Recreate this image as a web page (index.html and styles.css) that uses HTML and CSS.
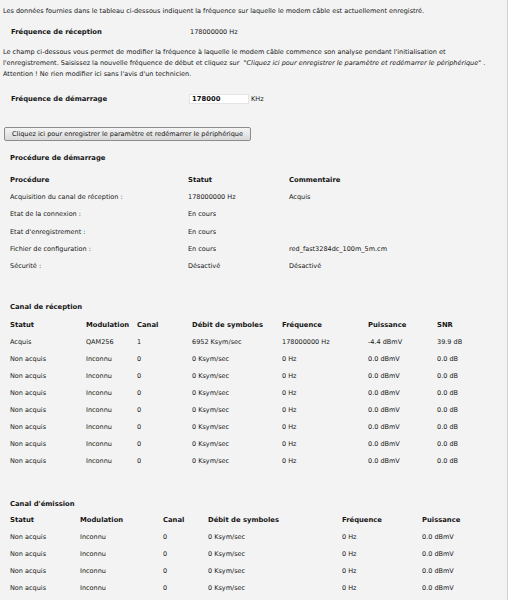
FILE: index.html
```html
<!DOCTYPE html>
<html lang="fr">
<head>
    <meta charset="UTF-8">
    <meta name="viewport" content="width=device-width, initial-scale=1.0">
    <title>Etat du modem câble</title>
    <link rel="stylesheet" href="styles.css">
</head>
<body>
    <div class="panel">
        <p class="intro">Les données fournies dans le tableau ci-dessous indiquent la fréquence sur laquelle le modem câble est actuellement enregistré.</p>

        <table class="pair">
            <tr>
                <th>Fréquence de réception</th>
                <td>178000000 Hz</td>
            </tr>
        </table>

        <p class="note">
            Le champ ci-dessous vous permet de modifier la fréquence à laquelle le modem câble commence son analyse pendant l'initialisation et<br>
            l'enregistrement. Saisissez la nouvelle fréquence de début et cliquez sur &nbsp;<em>"Cliquez ici pour enregistrer le paramètre et redémarrer le périphérique"</em> .<br>
            Attention ! Ne rien modifier ici sans l'avis d'un technicien.
        </p>

        <table class="pair start">
            <tr>
                <th>Fréquence de démarrage</th>
                <td><input type="text" class="freq-input" value="178000"> KHz</td>
            </tr>
        </table>

        <button class="btn">Cliquez ici pour enregistrer le paramètre et redémarrer le périphérique</button>

        <h3 class="title first">Procédure de démarrage</h3>
        <table class="grid proc">
            <tr><th>Procédure</th><th>Statut</th><th>Commentaire</th></tr>
            <tr><td>Acquisition du canal de réception :</td><td>178000000 Hz</td><td>Acquis</td></tr>
            <tr><td>Etat de la connexion :</td><td>En cours</td><td></td></tr>
            <tr><td>Etat d'enregistrement :</td><td>En cours</td><td></td></tr>
            <tr><td>Fichier de configuration :</td><td>En cours</td><td>red_fast3284dc_100m_5m.cm</td></tr>
            <tr><td>Sécurité :</td><td>Désactivé</td><td>Désactivé</td></tr>
        </table>

        <h3 class="title recv-title">Canal de réception</h3>
        <table class="grid recv">
            <tr><th>Statut</th><th>Modulation</th><th>Canal</th><th>Débit de symboles</th><th>Fréquence</th><th>Puissance</th><th>SNR</th></tr>
            <tr><td>Acquis</td><td>QAM256</td><td>1</td><td>6952 Ksym/sec</td><td>178000000 Hz</td><td>-4.4 dBmV</td><td>39.9 dB</td></tr>
            <tr><td>Non acquis</td><td>Inconnu</td><td>0</td><td>0 Ksym/sec</td><td>0 Hz</td><td>0.0 dBmV</td><td>0.0 dB</td></tr>
            <tr><td>Non acquis</td><td>Inconnu</td><td>0</td><td>0 Ksym/sec</td><td>0 Hz</td><td>0.0 dBmV</td><td>0.0 dB</td></tr>
            <tr><td>Non acquis</td><td>Inconnu</td><td>0</td><td>0 Ksym/sec</td><td>0 Hz</td><td>0.0 dBmV</td><td>0.0 dB</td></tr>
            <tr><td>Non acquis</td><td>Inconnu</td><td>0</td><td>0 Ksym/sec</td><td>0 Hz</td><td>0.0 dBmV</td><td>0.0 dB</td></tr>
            <tr><td>Non acquis</td><td>Inconnu</td><td>0</td><td>0 Ksym/sec</td><td>0 Hz</td><td>0.0 dBmV</td><td>0.0 dB</td></tr>
            <tr><td>Non acquis</td><td>Inconnu</td><td>0</td><td>0 Ksym/sec</td><td>0 Hz</td><td>0.0 dBmV</td><td>0.0 dB</td></tr>
            <tr><td>Non acquis</td><td>Inconnu</td><td>0</td><td>0 Ksym/sec</td><td>0 Hz</td><td>0.0 dBmV</td><td>0.0 dB</td></tr>
        </table>

        <h3 class="title emis-title">Canal d'émission</h3>
        <table class="grid emis">
            <tr><th>Statut</th><th>Modulation</th><th>Canal</th><th>Débit de symboles</th><th>Fréquence</th><th>Puissance</th></tr>
            <tr><td>Non acquis</td><td>Inconnu</td><td>0</td><td>0 Ksym/sec</td><td>0 Hz</td><td>0.0 dBmV</td></tr>
            <tr><td>Non acquis</td><td>Inconnu</td><td>0</td><td>0 Ksym/sec</td><td>0 Hz</td><td>0.0 dBmV</td></tr>
            <tr><td>Non acquis</td><td>Inconnu</td><td>0</td><td>0 Ksym/sec</td><td>0 Hz</td><td>0.0 dBmV</td></tr>
            <tr><td>Non acquis</td><td>Inconnu</td><td>0</td><td>0 Ksym/sec</td><td>0 Hz</td><td>0.0 dBmV</td></tr>
        </table>
    </div>
</body>
</html>
```

FILE: styles.css
```css
/* Page d'état du modem */
* { margin: 0; padding: 0; box-sizing: border-box; }
body {
    background: #fff;
    font-family: "DejaVu Sans", Verdana, sans-serif;
    font-size: 6.5px;
    color: #151515;
}
.panel {
    width: 508px;
    min-height: 600px;
    background: #f3f3f3;
    border-right: 1px solid #cfcfcf;
    padding-bottom: 10px;
}
th { font-weight: bold; font-size: 6.8px; text-align: left; }
td { text-align: left; }
table { border-collapse: collapse; table-layout: fixed; }
th, td { padding: 0; white-space: nowrap; vertical-align: middle; }

.intro { padding: 6px 0 0 3px; line-height: 11px; }

.pair { margin: 6.5px 0 0 11px; }
.pair tr { height: 17px; }
.pair th { width: 179px; }

.note {
    margin-top: 6px;
    padding-left: 3px;
    line-height: 11px;
    white-space: nowrap;
}
.note em { font-style: italic; }

.start { margin-top: 11px; }
.start th { width: 178px; }
.freq-input {
    width: 60px;
    height: 10px;
    border: 1px solid #e4e4e4;
    background: #fff;
    font-family: "DejaVu Sans", Verdana, sans-serif;
    font-weight: bold;
    font-size: 6.8px;
    color: #111;
    padding: 0 2px;
    vertical-align: middle;
    outline: none;
}

.btn {
    display: block;
    margin: 19.5px 0 0 4px;
    width: 247px;
    height: 14px;
    background: linear-gradient(#f4f4f4, #d9d9d9);
    border: 1px solid #8c8c8c;
    border-radius: 2px;
    font-family: "DejaVu Sans", Verdana, sans-serif;
    font-size: 6.5px;
    color: #111;
    cursor: pointer;
}

.title {
    font-size: 6.8px;
    font-weight: bold;
    line-height: 16px;
    padding-left: 10px;
}
.title.first { margin-top: 9px; }
.recv-title { margin-top: 24.5px; }
.emis-title { margin-top: 26px; }

.grid { margin-left: 10px; }
.grid tr { height: 17.2px; }
.proc { margin-top: 5.5px; }
.recv { margin-top: 1.5px; }
.recv tr { height: 17px; }
.emis { margin-top: -0.5px; }

.proc th:nth-child(1) { width: 178px; }
.proc th:nth-child(2) { width: 101px; }
.proc th:nth-child(3) { width: 150px; }

.recv th:nth-child(1) { width: 76px; }
.recv th:nth-child(2) { width: 51px; }
.recv th:nth-child(3) { width: 55px; }
.recv th:nth-child(4) { width: 90px; }
.recv th:nth-child(5) { width: 86px; }
.recv th:nth-child(6) { width: 69px; }
.recv th:nth-child(7) { width: 50px; }

.emis th:nth-child(1) { width: 70px; }
.emis th:nth-child(2) { width: 83px; }
.emis th:nth-child(3) { width: 45px; }
.emis th:nth-child(4) { width: 134px; }
.emis th:nth-child(5) { width: 80px; }
.emis th:nth-child(6) { width: 70px; }
```
